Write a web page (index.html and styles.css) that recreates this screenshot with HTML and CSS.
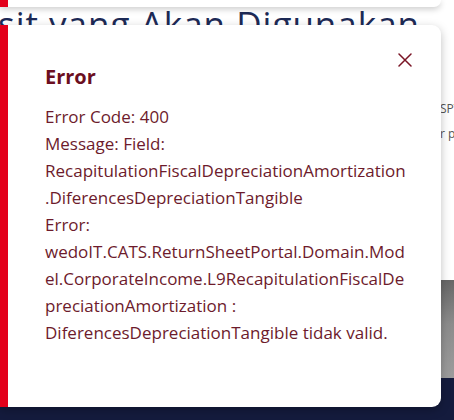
FILE: index.html
```html
<!DOCTYPE html>
<html lang="id">
<head>
<meta charset="utf-8">
<title>Error</title>
<link rel="stylesheet" href="styles.css">
</head>
<body>
<div class="page">
  <div class="topcard"></div>
  <h1 class="heading">sit yang Akan Digunakan</h1>
  <div class="side">
    <p class="side-line">SPT Tahunan</p>
    <p class="side-line">r pajak</p>
  </div>
  <div class="banner"></div>
  <div class="footer"></div>
</div>
<div class="modal" role="dialog" aria-labelledby="modal-title">
  <button class="close" type="button" aria-label="Tutup">
    <svg width="14" height="14" viewBox="0 0 14 14" aria-hidden="true">
      <path d="M1 1 L13 13 M13 1 L1 13" stroke="currentColor" stroke-width="1.5" fill="none" stroke-linecap="round"/>
    </svg>
  </button>
  <h2 class="modal-title" id="modal-title">Error</h2>
  <p class="modal-body">Error Code: 400<br>Message: Field:<br>RecapitulationFiscalDepreciationAmortization<br>.DiferencesDepreciationTangible<br>Error:<br>wedoIT.CATS.ReturnSheetPortal.Domain.Mod<br>el.CorporateIncome.L9RecapitulationFiscalDe<br>preciationAmortization :<br>DiferencesDepreciationTangible tidak valid.</p>
</div>
</body>
</html>
```

FILE: styles.css
```css
html, body {
  margin: 0;
  padding: 0;
}
body {
  width: 454px;
  height: 420px;
  overflow: hidden;
  background: #ffffff;
  font-family: "Open Sans", "Noto Sans", sans-serif;
  position: relative;
}
.page {
  display: flex;
  flex-direction: column;
  height: 420px;
}
.topcard {
  width: 433px;
  height: 7px;
  background: #ffffff;
  border-left: 8px solid #e3001b;
  border-radius: 0 0 8px 0;
  box-shadow: 0 2px 6px rgba(0, 0, 0, 0.22);
  flex: none;
  position: relative;
  z-index: 1;
}
.heading {
  margin: -3px 0 0 -2px;
  font-family: "Open Sans", sans-serif;
  font-weight: 400;
  font-size: 35px;
  letter-spacing: 1px;
  line-height: 40px;
  color: #1d2a56;
  white-space: nowrap;
  flex: none;
}
.side {
  margin: 57px 0 0 441px;
  overflow: hidden;
  white-space: nowrap;
  flex: none;
}
.side-line {
  margin: 0 0 10px -1px;
  font-size: 12px;
  line-height: 15px;
  color: #555555;
}
.banner {
  margin-top: auto;
  height: 98px;
  background: linear-gradient(180deg, #676767 0%, #8c8c8c 45%, #9c9c9c 100%);
  flex: none;
}
.footer {
  height: 42px;
  background: #141b3d;
  flex: none;
}
.modal {
  position: absolute;
  left: 0;
  top: 25px;
  width: 396px;
  height: 344px;
  background: #ffffff;
  border-left: 8px solid #e3001b;
  border-radius: 0 9px 9px 0;
  box-shadow: 0 3px 10px rgba(0, 0, 0, 0.25);
  padding: 38px 0 0 37px;
  z-index: 2;
}
.close {
  position: absolute;
  top: 28px;
  right: 29px;
  width: 14px;
  height: 14px;
  padding: 0;
  border: 0;
  background: none;
  color: #7a1526;
  display: flex;
}
.modal-title {
  margin: 0;
  font-size: 20px;
  line-height: 28px;
  font-weight: 700;
  color: #6b0f1f;
}
.modal-body {
  margin: 12px 0 0 0;
  font-size: 17px;
  line-height: 27px;
  color: #6d1b2c;
  white-space: nowrap;
}
```
